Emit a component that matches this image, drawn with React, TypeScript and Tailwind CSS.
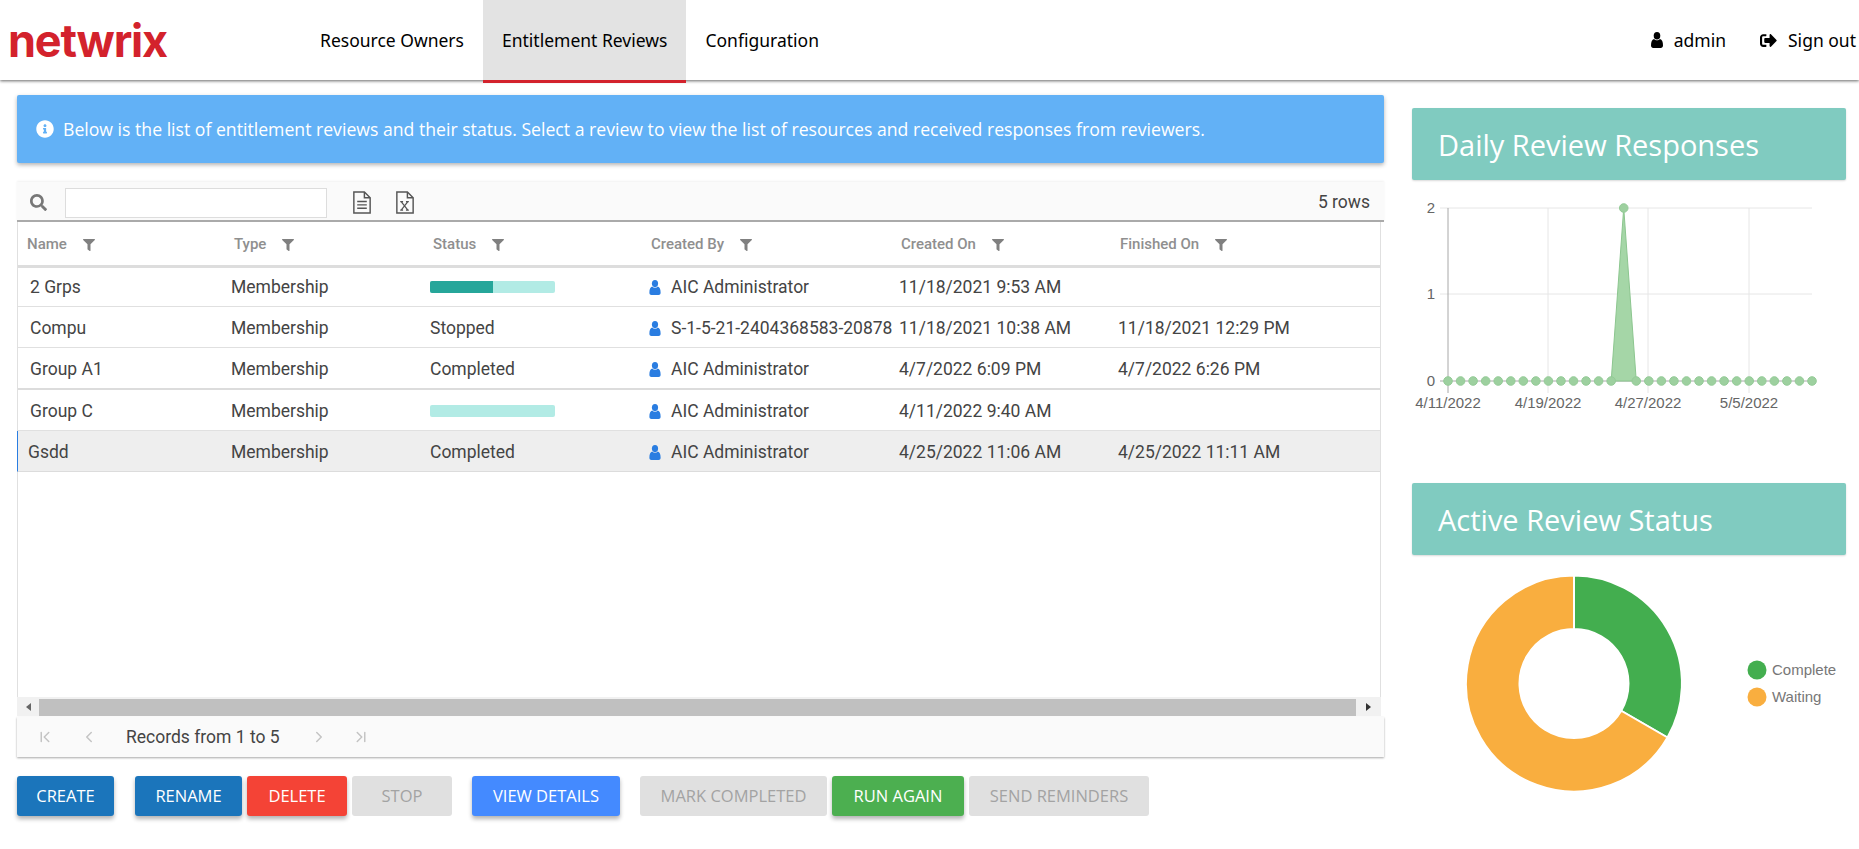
import { ChevronFirst, ChevronLast, ChevronLeft, ChevronRight } from "lucide-react";
import { FaFilter, FaInfoCircle, FaSearch, FaSignOutAlt } from "react-icons/fa";

const rows = [
  { name: "2 Grps", status: "half", by: "AIC Administrator", on: "11/18/2021 9:53 AM", done: "", cls: "h-[39px] border-b border-[#e0e0e0]", pad: "pl-[12px]" },
  { name: "Compu", status: "Stopped", by: "S-1-5-21-2404368583-20878", on: "11/18/2021 10:38 AM", done: "11/18/2021 12:29 PM", cls: "h-[41px] pt-[2px] border-b border-[#e0e0e0]", pad: "pl-[12px]" },
  { name: "Group A1", status: "Completed", by: "AIC Administrator", on: "4/7/2022 6:09 PM", done: "4/7/2022 6:26 PM", cls: "h-[42px] pt-[2px] border-b-2 border-[#dcdcdc]", pad: "pl-[12px]" },
  { name: "Group C", status: "empty", by: "AIC Administrator", on: "4/11/2022 9:40 AM", done: "", cls: "h-[41px] pt-[2px] border-b border-[#e0e0e0]", pad: "pl-[12px]" },
  { name: "Gsdd", status: "Completed", by: "AIC Administrator", on: "4/25/2022 11:06 AM", done: "4/25/2022 11:11 AM", cls: "h-[41px] pt-[2px] -ml-px border-l border-b border-l-[#2a7de1] border-b-[#dcdcdc] bg-[#eeeeee]", pad: "pl-[10px]" },
];

const columns = ["Name", "Type", "Status", "Created By", "Created On", "Finished On"];

const gridCols = "grid grid-cols-[207px_199px_218px_250px_219px_1fr]";

const X0 = 1448;
const STEP = 364 / 29;
const points = Array.from({ length: 30 }, (_, i) => ({ x: X0 + i * STEP, y: i === 14 ? 208 : 381 }));

function DocIcon({ excel }: { excel?: boolean }) {
  return (
    <svg viewBox="0 0 20 24" className="h-[23px] w-[20px]" fill="none" stroke="#555" strokeWidth="1.5">
      <path d="M1.5 1h11l6 6v16h-17z" />
      <path d="M12.5 1v6h6" />
      {excel ? (
        <path d="M6 11l7 9M13 11l-7 9M5 11h3M11 11h3M5 20h3M11 20h3" strokeWidth="1.3" />
      ) : (
        <path d="M5 11h10M5 14.5h10M5 18h10" />
      )}
    </svg>
  );
}

// narrow person glyph, the icon packs only have the wide one
function UserIcon({ className }: { className: string }) {
  return (
    <svg viewBox="0 0 12 16" className={className} fill="currentColor">
      <ellipse cx="6" cy="3.8" rx="3.3" ry="3.8" />
      <path d="M0 13.6C0 9.5 1 7.4 3 6.9 3.8 7.7 4.8 8.2 6 8.2S8.200 7.700 9 6.900c2 .5 3 2.600 3 6.700 0 1.500-1 2.400-2.200 2.400H2.200C1 16 0 15.100 0 13.600z" />
    </svg>
  );
}

function Progress({ value }: { value: number }) {
  return (
    <div className="h-[12px] w-[125px] overflow-hidden rounded-[2px] bg-[#b2ebe5]">
      <div className="h-full bg-[#26a69a]" style={{ width: `${value}%` }} />
    </div>
  );
}

function Card({ title }: { title: string }) {
  return (
    <div className="flex h-[72px] items-center rounded-[2px] bg-[#80cbc0] pl-[26px] pt-[2px] font-['Open_Sans',sans-serif] text-[29px] text-white shadow-[0_1px_2px_rgba(0,0,0,0.15)]">
      {title}
    </div>
  );
}

function Btn({ label, cls }: { label: string; cls: string }) {
  return (
    <button
      type="button"
      className={`flex h-[40px] items-center justify-center rounded-[3px] pt-px font-['Open_Sans',sans-serif] text-[16.5px] uppercase ${cls}`}
    >
      {label}
    </button>
  );
}

const raised = "text-white shadow-[0_3px_4px_rgba(0,0,0,0.3)]";
const off = "bg-[#e0e0e0] text-[#a3a3a3]";

export default function App() {
  return (
    <div className="flex h-[849px] w-full flex-col overflow-hidden bg-white font-['Roboto',sans-serif]">
      <header className="relative z-10 flex h-[80px] shrink-0 items-start bg-white font-['Noto_Sans',sans-serif] text-[17.5px] text-black shadow-[0_1px_3px_rgba(0,0,0,0.6)]">
        <div className="flex h-[80px] w-[301px] items-center pl-[8px]">
          <span className="font-['Inter',sans-serif] text-[45px] font-bold leading-none tracking-[-1.2px] text-[#d3222c]">netwrix</span>
        </div>
        <nav className="flex">
          <a className="flex h-[80px] items-center px-[19px]">Resource Owners</a>
          <a className="flex h-[83px] items-center border-b-[3px] border-[#d3222c] bg-[#e3e3e3] px-[19px]">Entitlement Reviews</a>
          <a className="flex h-[80px] items-center px-[19px]">Configuration</a>
        </nav>
        <div className="ml-auto flex h-[80px] items-center pr-[3px]">
          <UserIcon className="mr-[10px] h-[16px] w-[14px]" />
          <span>admin</span>
          <FaSignOutAlt className="ml-[34px] mr-[11px] h-[17px] w-[17px]" />
          <span>Sign out</span>
        </div>
      </header>

      <main className="flex flex-1">
        <section className="ml-[17px] w-[1367px] pt-[15px]">
          <div className="flex h-[68px] items-center rounded-[2px] bg-[#62b1f6] pl-[19px] font-['Open_Sans',sans-serif] text-[17.65px] text-white shadow-[0_2px_4px_rgba(0,0,0,0.3)]">
            <FaInfoCircle className="mr-[9px] h-[18px] w-[18px]" />
            Below is the list of entitlement reviews and their status. Select a review to view the list of resources and received responses from reviewers.
          </div>

          <div className="mt-[19px] flex h-[40px] items-center border-b-2 border-[#aaaaaa] bg-[#fafafa] pt-[3px] shadow-[0_-1px_2px_rgba(0,0,0,0.06)]">
            <FaSearch className="ml-[13px] h-[17px] w-[17px] text-[#777]" />
            <div className="ml-[18px] h-[30px] w-[262px] border border-[#dddddd] bg-white" />
            <div className="ml-[25px] flex gap-[23px]">
              <DocIcon />
              <DocIcon excel />
            </div>
            <span className="ml-auto pr-[14px] text-[17.5px] text-[#444]">5 rows</span>
          </div>

          <div className="flex h-[475px] w-[1364px] flex-col border-x border-[#e0e0e0] bg-white">
            <div className={`${gridCols} h-[46px] shrink-0 border-b-[3px] border-[#dddddd] pt-[2px]`}>
              {columns.map((c) => (
                <div key={c} className="flex items-center pl-[9px] text-[15px] font-medium text-[#8f8f8f]">
                  {c}
                  <FaFilter className="ml-[16px] h-[12px] w-[12px] text-[#808080]" />
                </div>
              ))}
            </div>
            {rows.map((r) => (
              <div key={r.name} className={`${gridCols} ${r.cls} shrink-0 text-[17.5px] text-[#444]`}>
                <div className={`flex items-center ${r.pad}`}>{r.name}</div>
                <div className="flex items-center pl-[6px]">Membership</div>
                <div className="flex items-center pl-[6px]">
                  {r.status === "half" ? <Progress value={50} /> : r.status === "empty" ? <Progress value={0} /> : r.status}
                </div>
                <div className="flex items-center overflow-hidden whitespace-nowrap pl-[7px]">
                  <UserIcon className="mr-[10px] h-[15px] w-[12px] shrink-0 text-[#2a7de1]" />
                  {r.by}
                </div>
                <div className="flex items-center whitespace-nowrap pl-[7px]">{r.on}</div>
                <div className="flex items-center whitespace-nowrap pl-[7px]">{r.done}</div>
              </div>
            ))}
          </div>

          <div className="flex h-[19px] w-[1364px] items-center bg-[#f1f1f1]">
            <div className="flex h-full w-[22px] items-center justify-center">
              <div className="h-0 w-0 border-y-[4px] border-r-[5px] border-y-transparent border-r-[#666]" />
            </div>
            <div className="h-[17px] w-[1317px] self-end bg-[#c0c0c0]" />
            <div className="flex h-full flex-1 items-center justify-center">
              <div className="h-0 w-0 border-y-[4px] border-l-[5px] border-y-transparent border-l-[#333]" />
            </div>
          </div>

          <div className="mt-px flex h-[40px] items-center bg-[#fafafa] text-[#c4c4c4] shadow-[0_1px_2px_rgba(0,0,0,0.35)]">
            <ChevronFirst className="ml-[19px] h-[18px] w-[18px]" />
            <ChevronLeft className="ml-[26px] h-[18px] w-[18px]" />
            <span className="ml-[28px] text-[17.5px] text-[#444]">Records from 1 to 5</span>
            <ChevronRight className="ml-[30px] h-[18px] w-[18px]" />
            <ChevronLast className="ml-[24px] h-[18px] w-[18px]" />
          </div>

          <div className="mt-[19px] flex">
            <Btn label="Create" cls={`w-[97px] bg-[#1b75bb] ${raised}`} />
            <Btn label="Rename" cls={`ml-[21px] w-[107px] bg-[#1b75bb] ${raised}`} />
            <Btn label="Delete" cls={`ml-[5px] w-[100px] bg-[#f44336] ${raised}`} />
            <Btn label="Stop" cls={`ml-[5px] w-[100px] ${off}`} />
            <Btn label="View Details" cls={`ml-[20px] w-[148px] bg-[#448aff] ${raised}`} />
            <Btn label="Mark Completed" cls={`ml-[20px] w-[187px] ${off}`} />
            <Btn label="Run Again" cls={`ml-[5px] w-[132px] bg-[#4caf50] ${raised}`} />
            <Btn label="Send Reminders" cls={`ml-[5px] w-[180px] ${off}`} />
          </div>
        </section>

        <aside className="ml-[28px] w-[434px] pt-[28px]">
          <Card title="Daily Review Responses" />
          <svg viewBox="1412 180 434 303" className="block h-[303px] w-[434px] font-['Liberation_Sans',sans-serif]">
            {[208, 294].map((y) => (
              <line key={y} x1={X0 - 8} x2={1812} y1={y} y2={y} stroke="#e6e6e6" />
            ))}
            {[1548, 1648, 1749].map((x) => (
              <line key={x} x1={x} x2={x} y1={208} y2={393} stroke="#e6e6e6" />
            ))}
            <line x1={X0} x2={X0} y1={208} y2={393} stroke="#a8a8a8" />
            <line x1={X0 - 8} x2={1812} y1={381} y2={381} stroke="#a8a8a8" />
            <polygon points={`${points[13].x},381 ${points[14].x},208 ${points[15].x},381`} fill="#a5d6a7" stroke="#8cc68f" />
            {points.map((p) => (
              <circle key={p.x} cx={p.x} cy={p.y} r={4.3} fill="#9dd09f" stroke="#94cb97" />
            ))}
            <g fontSize="15" fill="#666" textAnchor="middle">
              <text x={1431} y={213}>2</text>
              <text x={1431} y={299}>1</text>
              <text x={1431} y={386}>0</text>
              <text x={1448} y={408}>4/11/2022</text>
              <text x={1548} y={408}>4/19/2022</text>
              <text x={1648} y={408}>4/27/2022</text>
              <text x={1749} y={408}>5/5/2022</text>
            </g>
          </svg>
          <Card title="Active Review Status" />
          <svg viewBox="1412 555 434 270" className="block h-[270px] w-[434px] font-['Liberation_Sans',sans-serif]">
            <path d="M1574 575.5A108 108 0 0 1 1667.5 737.5L1621.2 710.75A54.5 54.5 0 0 0 1574 629Z" fill="#43ae4f" stroke="#fff" strokeWidth="2" />
            <path d="M1667.5 737.5A108 108 0 1 1 1574 575.5L1574 629A54.5 54.5 0 1 0 1621.2 710.75Z" fill="#f9ae3f" stroke="#fff" strokeWidth="2" />
            <circle cx={1757} cy={670} r={9.5} fill="#43ae4f" />
            <circle cx={1757} cy={697} r={9.5} fill="#f9ae3f" />
            <g fontSize="15" fill="#777">
              <text x={1772} y={675}>Complete</text>
              <text x={1772} y={702}>Waiting</text>
            </g>
          </svg>
        </aside>
      </main>
    </div>
  );
}
